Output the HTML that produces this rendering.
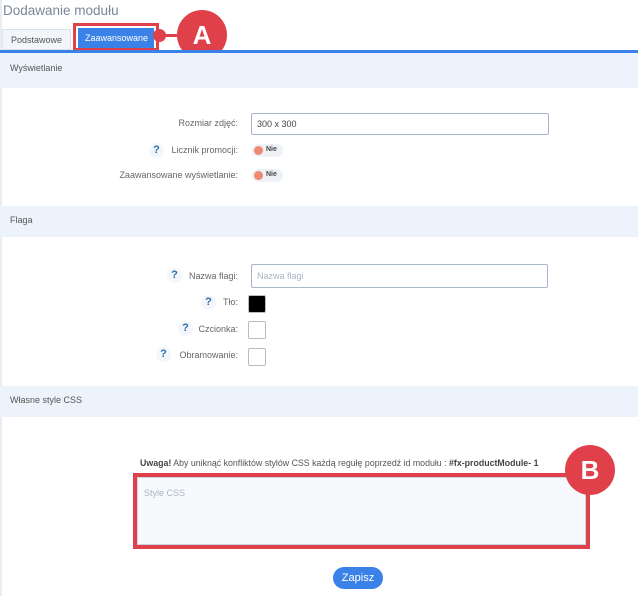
<!DOCTYPE html>
<html><head><meta charset="utf-8"><style>
*{box-sizing:border-box;margin:0;padding:0}
body{width:638px;height:596px;background:#fff;font-family:"Liberation Sans",sans-serif;position:relative;overflow:hidden;color:#555}
.a{position:absolute}
.title{left:3px;top:3px;font-size:13.5px;color:#7a8896}
.hdr{left:0;width:638px;height:33px;background:#edf3fa;font-size:9px;color:#555;padding:10px 0 0 10px}
.lbl{font-size:9px;color:#666;text-align:right}
.q{font-size:11px;font-weight:bold;color:#2f6fa8;width:15px;height:15px;border-radius:50%;background:#f3f7fb;text-align:center;line-height:14px}
.inp{border:1px solid #a9b5c8;border-radius:2px;background:#fff;font-size:9px;padding:6px 5px}
.tog{width:31px;height:13px;background:#eef2f7;border-radius:7px}
.tog i{position:absolute;left:2px;top:2px;width:9px;height:9px;border-radius:50%;background:#ef8a72}
.tog b{position:absolute;left:14px;top:2px;font-size:7px;color:#444}
.sw{width:18px;height:18px;border:1px solid #bbb;border-radius:2px}
.circ{width:50px;height:50px;border-radius:50%;background:#e0404a;color:#fff;font-size:26px;font-weight:bold;text-align:center;line-height:50px}
</style></head><body>
<div class="a" style="left:0;top:0;width:2px;height:596px;background:#e8edf2"></div>
<div class="a title">Dodawanie modułu</div>
<div class="a" style="left:2px;top:29px;width:69px;height:21px;background:#f2f5f9;border:1px solid #dde3ea;font-size:9px;color:#555;padding:5px 0 0 8px">Podstawowe</div>
<div class="a" style="left:73px;top:23px;width:86px;height:28px;border:3px solid #e0404a"></div>
<div class="a" style="left:78px;top:28px;width:76px;height:20px;background:#3b82e8;color:#fff;font-size:9px;padding:5px 0 0 7px">Zaawansowane</div>
<div class="a" style="left:158px;top:34px;width:24px;height:3px;background:#e0404a"></div>
<div class="a" style="left:153px;top:29px;width:13px;height:13px;border-radius:50%;background:#e0404a"></div>
<div class="a circ" style="left:177px;top:10px">A</div>
<div class="a" style="left:0;top:50px;width:638px;height:3px;background:#3b82e8"></div>

<div class="a hdr" style="top:53px;height:35px">Wyświetlanie</div>
<div class="a lbl" style="left:100px;width:138px;top:118px">Rozmiar zdjęć:</div>
<div class="a inp" style="left:251px;top:113px;width:298px;height:22px;color:#444;padding-top:5px">300 x 300</div>
<div class="a q" style="left:149px;top:143px">?</div>
<div class="a lbl" style="left:100px;width:138px;top:145px">Licznik promocji:</div>
<div class="a tog" style="left:252px;top:144px"><i></i><b>Nie</b></div>
<div class="a lbl" style="left:100px;width:138px;top:170px">Zaawansowane wyświetlanie:</div>
<div class="a tog" style="left:252px;top:169px"><i></i><b>Nie</b></div>

<div class="a hdr" style="top:206px;height:31px;padding-top:9px">Flaga</div>
<div class="a q" style="left:167px;top:268px">?</div>
<div class="a lbl" style="left:150px;width:88px;top:271px">Nazwa flagi:</div>
<div class="a inp" style="left:251px;top:264px;width:297px;height:24px;color:#aab4c4">Nazwa flagi</div>
<div class="a q" style="left:201px;top:295px">?</div>
<div class="a lbl" style="left:150px;width:88px;top:297px">Tło:</div>
<div class="a sw" style="left:248px;top:295px;background:#000"></div>
<div class="a q" style="left:178px;top:321px">?</div>
<div class="a lbl" style="left:150px;width:88px;top:324px">Czcionka:</div>
<div class="a sw" style="left:248px;top:321px"></div>
<div class="a q" style="left:156px;top:347px">?</div>
<div class="a lbl" style="left:120px;width:118px;top:350px">Obramowanie:</div>
<div class="a sw" style="left:248px;top:348px"></div>

<div class="a hdr" style="top:386px;height:31px;padding-top:9px">Własne style CSS</div>
<div class="a" style="left:140px;top:458px;font-size:8.8px;color:#555"><b style="color:#444">Uwaga!</b> Aby uniknąć konfliktów stylów CSS każdą regułę poprzedź id modułu : <b style="color:#444">#fx-productModule- 1</b></div>
<div class="a" style="left:133px;top:473px;width:457px;height:76px;border:4px solid #e0404a"></div>
<div class="a" style="left:137px;top:477px;width:449px;height:68px;background:#f7fafd;border:1px solid #c9d4e2;font-size:9px;color:#aab4c4;padding:10px 6px">Style CSS</div>
<div class="a circ" style="left:565px;top:445px">B</div>
<div class="a" style="left:333px;top:567px;width:50px;height:22px;border-radius:11px;background:#3b82e8;color:#fff;font-size:11px;text-align:center;line-height:22px">Zapisz</div>
</body></html>
